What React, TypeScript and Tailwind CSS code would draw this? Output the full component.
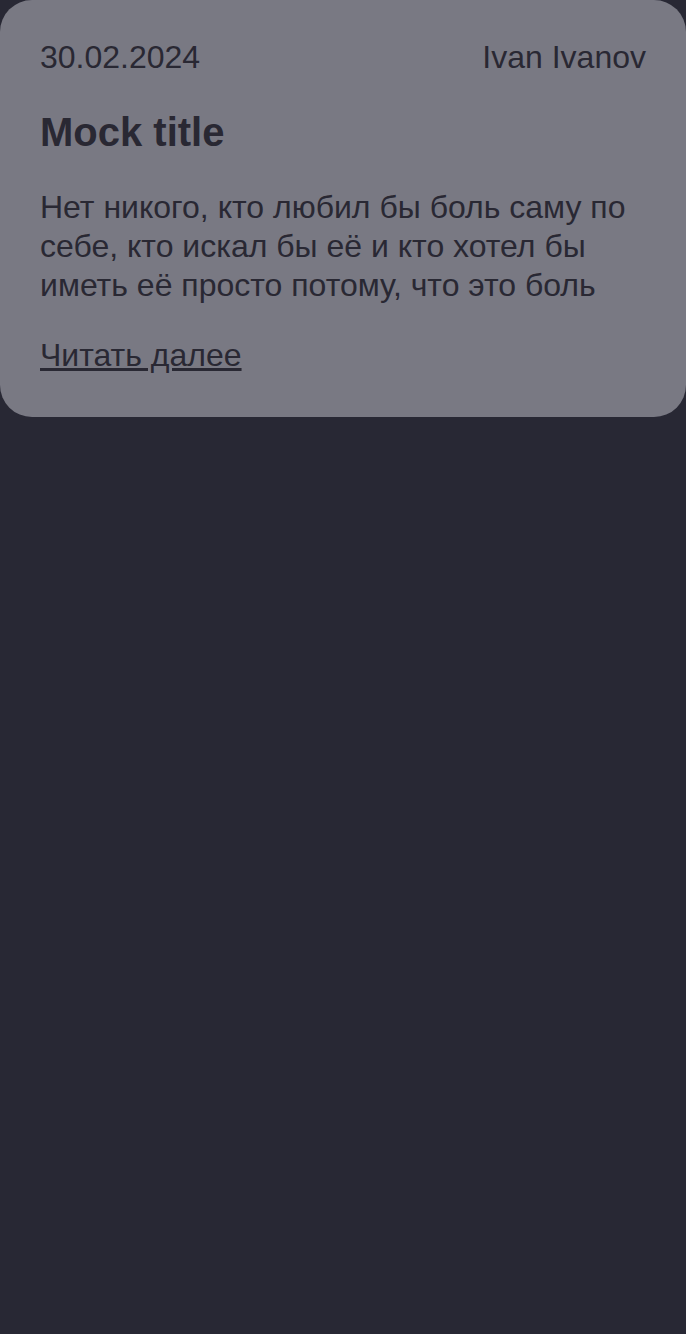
export default function App() {
  return (
    <div
      className="min-h-[1334px] w-full bg-[#282834] text-[#292833]"
      style={{ fontFamily: '"Liberation Sans", Arial, sans-serif' }}
    >
      <div className="rounded-[32px] bg-[#797983] px-[40px] pt-[39px] pb-[43px]">
        <div className="flex items-start justify-between text-[32px] leading-[normal]">
          <span>30.02.2024</span>
          <span>Ivan Ivanov</span>
        </div>
        <h1 className="mt-[34px] text-[40px] font-bold leading-[normal]">Mock title</h1>
        <p className="mt-[33px] text-[32px] leading-[39px]">
          Нет никого, кто любил бы боль саму по себе, кто искал бы её и кто хотел бы иметь её просто потому, что это боль
        </p>
        <a href="#" className="mt-[32px] block w-fit text-[32px] leading-[normal] underline">
          Читать далее
        </a>
      </div>
    </div>
  );
}
